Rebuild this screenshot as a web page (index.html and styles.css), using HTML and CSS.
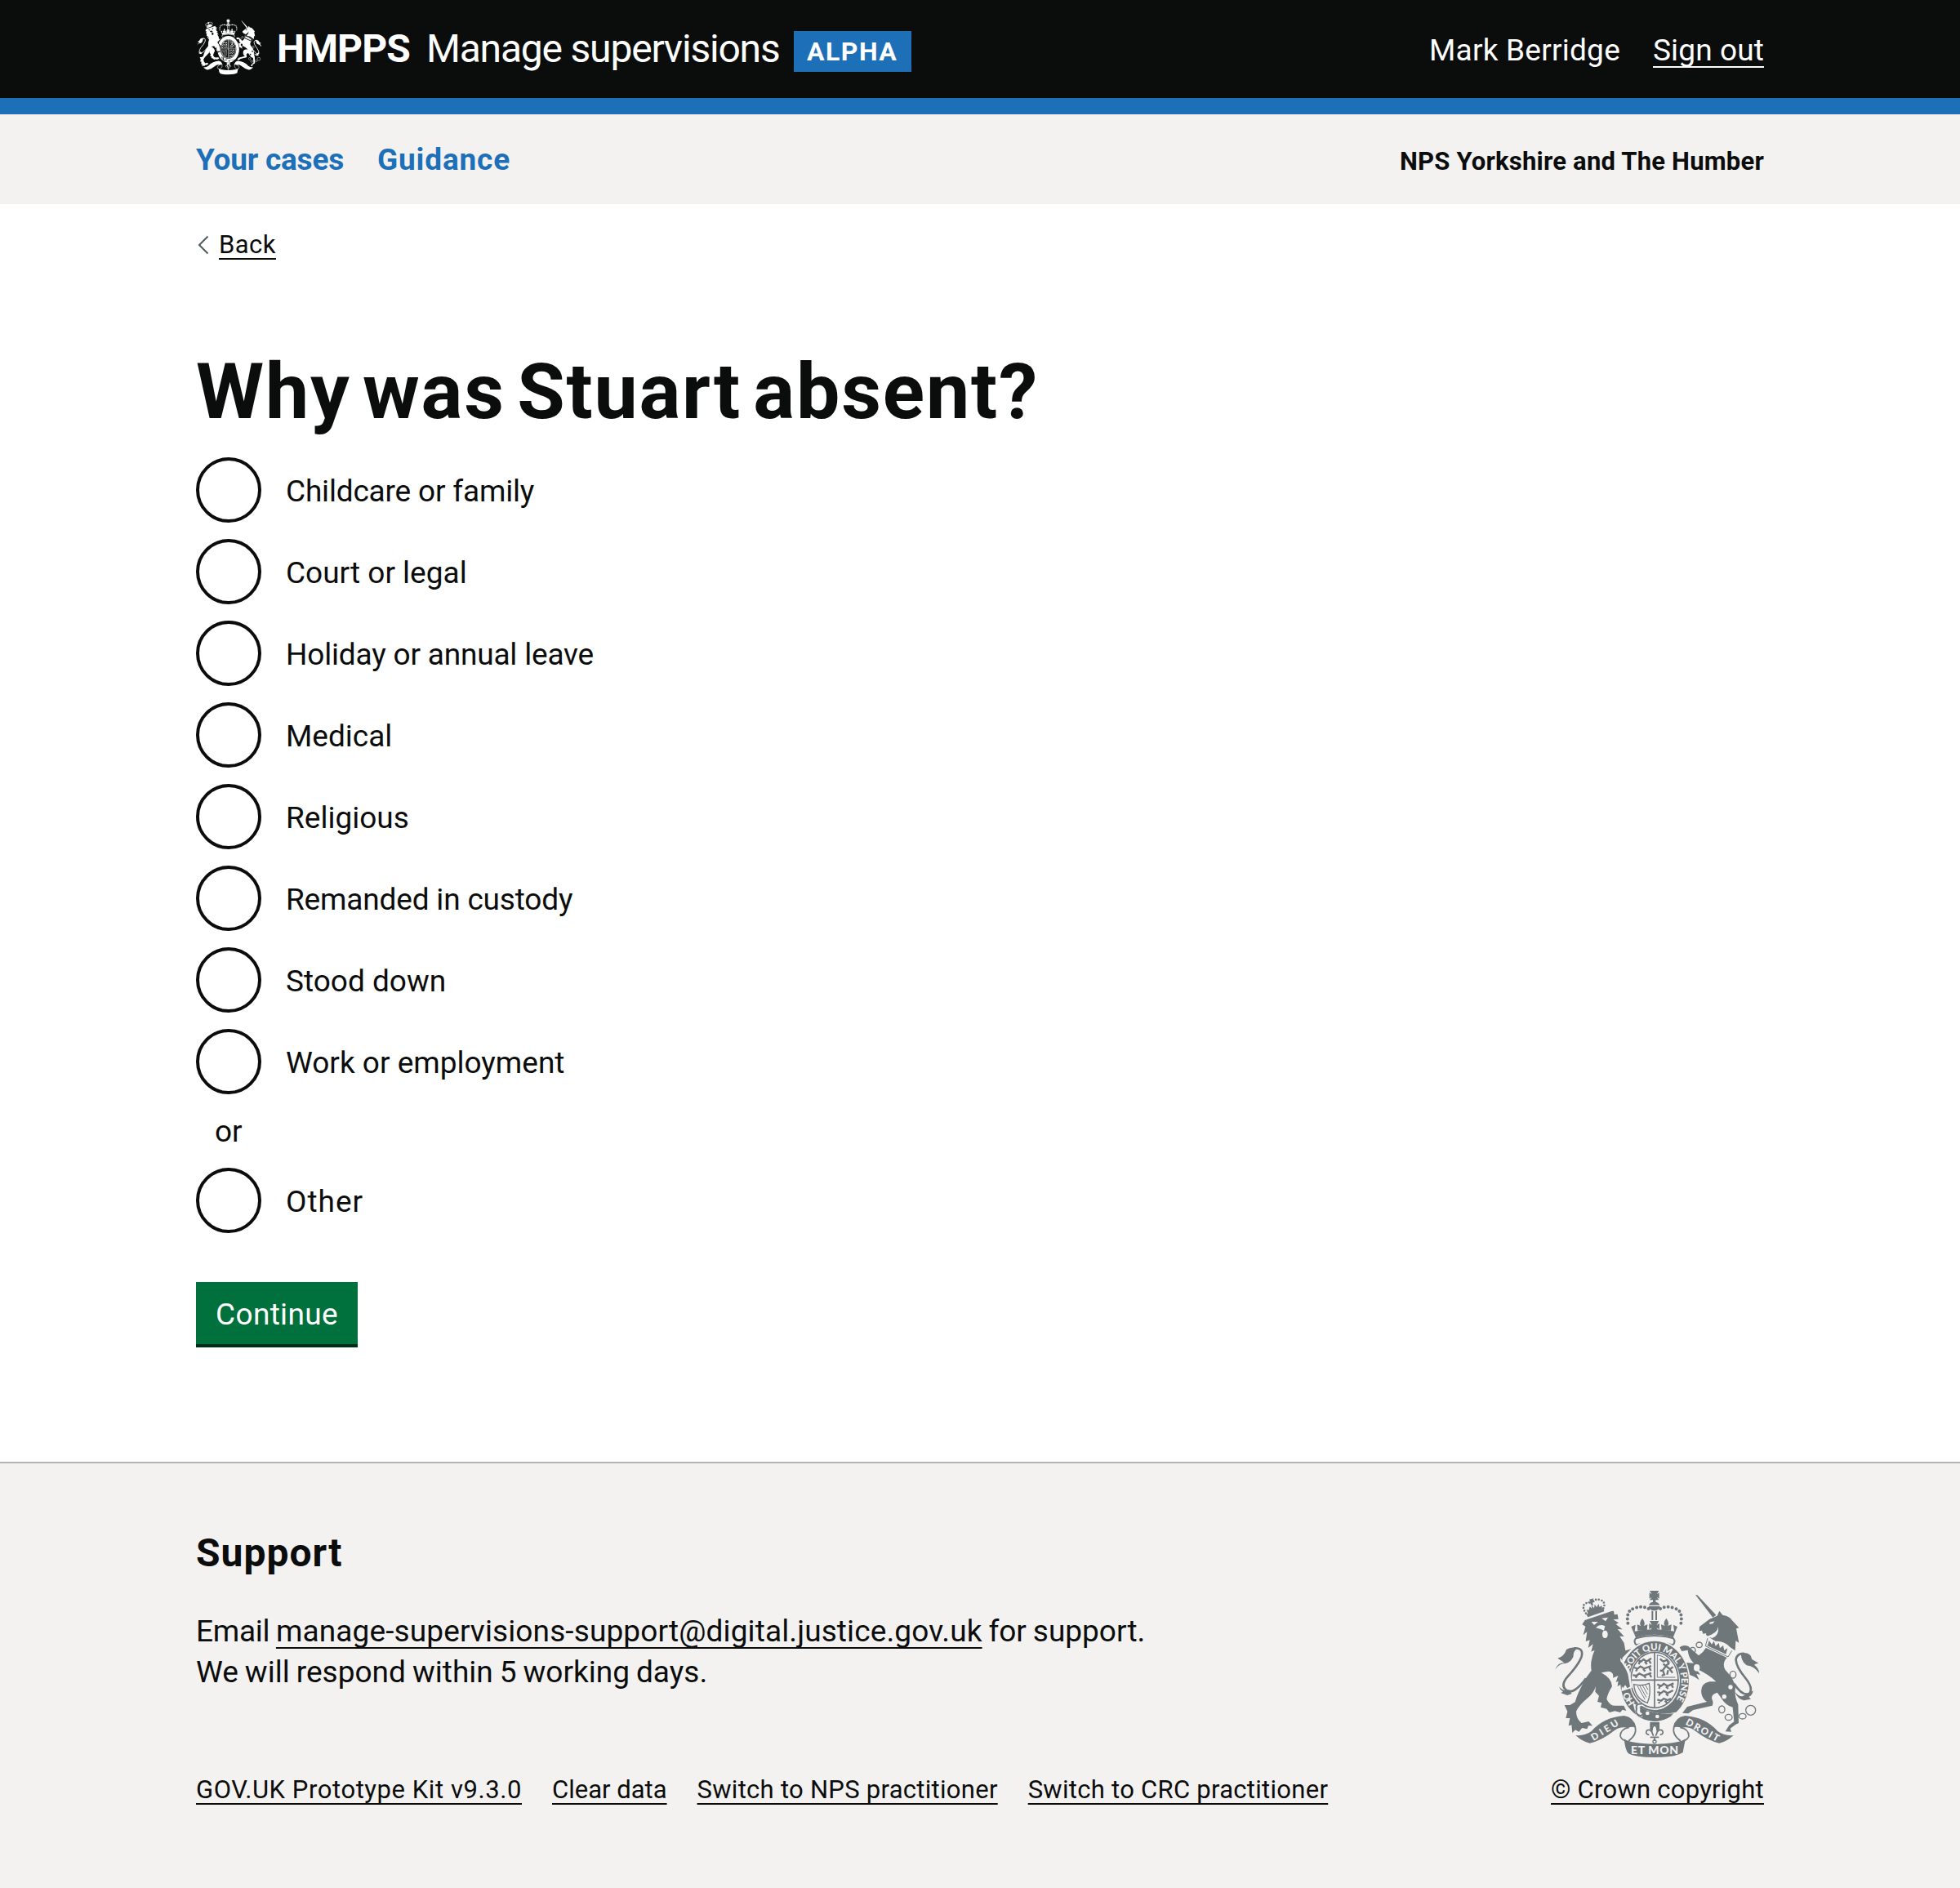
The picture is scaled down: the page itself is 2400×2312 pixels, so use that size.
FILE: index.html
```html
<!DOCTYPE html>
<html lang="en">
<head>
<meta charset="utf-8">
<title>Why was Stuart absent? – Manage supervisions</title>
<link rel="stylesheet" href="styles.css">
</head>
<body>
<svg class="defs" aria-hidden="true">
  <symbol id="arms" viewBox="54 48 786 624" preserveAspectRatio="none">
    <!-- Royal crown -->
    <g fill="currentColor">
      <path d="M420 54h34l-8 13 9-6v22l-9-6 8 11h-34l8-11-9 6V61l9 6Z"/>
      <path d="M432 87h10v8a20 18 0 0 1 15 12h-40a20 18 0 0 1 15-12Z"/>
      <path d="M416 111h42a21 16 0 0 1-42 0Z"/>
      <path d="M427 128h6v34h-6ZM441 128h6v34h-6Z"/>
      <path d="M420 165h34l-8 15 10-6v22l-10-6 6 12h-30l6-12-10 6v-22l10 6Z"/>
      <path d="M393 155q14 18 5 28l14-5-2 22h-34l-2-22 14 5q-9-10 5-28ZM481 155q14 18 5 28l14-5-2 22h-34l-2-22 14 5q-9-10 5-28Z"/>
      <path d="M352 186l16-7-3 24q72-14 145 0l-3-24 15 7-16 40q-69-22-137 0Z"/>
    </g>
    <path class="dots" d="M340 173Q332 125 365 118Q400 106 424 126M535 173Q543 125 510 118Q475 106 451 126"/>
    <path class="line" d="M369 229q68-20 138 0q10 12-2 24q-67-22-134 0q-12-12-2-24Z" stroke-width="6"/>
    <!-- Lion -->
    <g fill="currentColor">
      <path d="M172 178L182 162L280 129L288 128L290 142L302 140L305 158L286 160L306 172L296 177L320 196L302 195L326 222L310 221L326 246L331 274L352 268L320 300Q316 330 332 350Q346 368 348 408L338 412L330 400L322 412L314 398L302 404L309 385L296 390L304 366L285 374Q290 352 268 350L242 355Q280 375 282 405Q266 430 262 452Q275 480 300 476L325 476L334 495L320 491L312 501L292 496L272 501L262 488L240 482L244 466L228 462L234 440L220 425L222 405Q215 430 190 450Q160 475 150 497Q150 525 170 540L196 534L210 550L195 550L190 562L172 558L160 572L147 565L136 576L133 547L122 550L127 522L112 522L118 497L107 474L127 474L146 463Q155 430 175 395Q187 370 206 347Q200 310 218 272L205 278L212 250L194 264L200 235L185 240L190 205L176 217L184 185Z"/>
      <path d="M187 140L251 119L253 130L193 151Z"/>
      <path d="M200 112l8 8-2-12 10 10 2-14 8 10 6-12 4 12 8-6 2 14-52 18-6-18 8 4Z"/>
      <path d="M198 86l16-4-3 9 8 3-9 4 3 10-7 1-1-9-8 3 5-8Z"/>
      <path d="M72 345Q82 318 106 318L82 302Q106 296 114 270Q130 258 156 265Q138 276 140 295Q130 322 100 322Q82 328 72 345Z"/>
      <path d="M88 407Q105 425 124 418L134 432L118 438L94 430L102 424Q90 418 88 407Z"/>
    </g>
    <path class="dots dots-small" d="M186 137Q168 110 184 101Q200 92 206 102Q215 82 238 87Q262 96 249 120"/>
    <path class="line" d="M142 265Q178 262 170 295Q160 325 118 370Q92 400 112 418Q140 440 186 376" stroke-width="8"/>
    <g class="paper">
      <path d="M206 168l24 0-14 12ZM244 155l23-3-9 14ZM222 190q15-16 34-6l-4 16-14-6Z"/>
      <ellipse cx="256" cy="214" rx="10" ry="14"/>
    </g>
    <!-- Unicorn -->
    <g fill="currentColor">
      <path d="M588 69L595 70L664 143L652 152Z"/>
      <path d="M603 186L640 158L668 146L676 128L688 143Q716 148 722 162L748 190L738 193L748 245L736 238L734 274L714 260Q690 236 660 240L640 226Q622 216 628 210L616 212L612 200L602 202Z"/>
      <path d="M628 262L704 300Q684 320 698 345Q732 380 735 410Q730 440 745 472L747 540L736 545L716 560L720 572L698 571L712 548L730 535L725 482Q700 476 684 450Q672 432 668 428Q642 436 650 455Q655 465 650 476L580 492L562 505L540 503L558 480L630 462Q612 450 610 430Q605 395 640 388L664 388Q635 360 590 340L606 362L592 360L602 382L584 370L560 360L550 330L554 318L582 320Q562 300 560 272L538 276L530 262Q545 250 562 258L582 276L600 292Q618 280 628 262Z"/>
      <path d="M755 283Q792 278 796 306L820 320Q808 322 804 326Q823 340 822 357Q805 332 776 328Q756 315 755 283Z"/>
      <path d="M733 425Q750 445 762 441L800 421Q798 438 784 444L792 452L766 457Q742 450 733 425Z"/>
    </g>
    <path class="line" d="M730 395Q760 442 786 432Q802 412 772 375Q735 330 737 305Q742 283 768 285" stroke-width="8"/>
    <!-- Crown collar -->
    <path class="paper" d="M630 222L724 272L712 302L622 262Z"/>
    <path fill="currentColor" d="M634 252l4-16 10 15 8-12 6 18 12-11 4 19 12-10 4 18 12-8-6 22-70-32Z"/>
    <path class="line" d="M633 228L625 257L708 297L722 274" stroke-width="3"/>
    <g class="line" stroke-width="4">
      <ellipse cx="602" cy="253" rx="11" ry="10"/><ellipse cx="578" cy="273" rx="10" ry="11"/>
      <ellipse cx="726" cy="362" rx="11" ry="13"/><ellipse cx="685" cy="490" rx="11" ry="13"/>
      <ellipse cx="710" cy="519" rx="13" ry="11"/><ellipse cx="761" cy="515" rx="13" ry="10"/>
      <circle cx="791" cy="493" r="18"/>
    </g>
    <g class="paper">
      <ellipse cx="593" cy="337" rx="11" ry="13"/>
      <circle cx="717" cy="408" r="8"/><circle cx="694" cy="443" r="8"/>
      <path d="M640 170l18-4-6 9-12 1ZM628 222Q670 210 672 186Q676 218 650 228Z"/>
    </g>
    <!-- Garter -->
    <ellipse class="paper" cx="438" cy="386" rx="131" ry="152"/>
    <ellipse cx="438" cy="386" rx="126" ry="147" fill="currentColor"/>
    <ellipse class="paper" cx="438" cy="384" rx="93" ry="108"/>
    <g class="line" stroke-width="5">
      <path d="M438 278V482M350 382H526"/>
      <ellipse cx="438" cy="382" rx="87" ry="102"/>
      <path d="M448 290V372H514M448 290Q480 296 496 318" stroke-width="3"/>
      <path d="M362 398q30 8 56-4q8 36-6 72q-46-14-50-68Z" stroke-width="4"/>
      <path d="M375 404l28 50M384 404l24 42M394 402l18 32M404 400l10 18" stroke-width="3"/>
    </g>
    <!-- Lions passant and rampant in the quarters -->
    <g class="line" stroke-width="7">
      <path d="M376 308l12 6 10-8 10 8 18-12M384 314l-4 10M402 314l8 10M418 310l6 12M362 336l14 4 10-8 14 8 26-10M374 340l-4 10M396 342l8 8M418 334l6 14M358 364l14 2 10-8 16 8 28-10M374 366l-6 8M400 368l6 6M420 360l6 12"/>
      <path d="M448 398l14 6 10-8 14 8 22-10M458 404l-4 10M480 406l8 8M500 398l6 12M448 426l14 4 10-8 14 8 20-10M458 430l-4 10M480 432l8 8M448 454l14 4 10-8 14 6 12-6M456 458l-2 10M476 458l8 8"/>
      <path d="M458 304l12 10 14-6 6 14-12 8-8-8M480 330l14 12 12-8M480 330l-12 16-10 2M488 346l-4 16M468 346l6 16-10 4M494 342l10 14"/>
    </g>
    <!-- Buckle and strap -->
    <path class="paper" d="M358 466Q440 520 516 500L524 508Q440 526 370 512Z"/>
    <path fill="currentColor" d="M372 476Q438 512 508 505Q480 532 438 533Q400 530 372 510Z"/>
    <path class="paper-line" d="M388 470q-18 4-10 20q-4 18 16 22" stroke-width="14"/>
    <path class="line" d="M390 470q-24-2-18 18q-8 20 16 26l10-10M388 486q14-4 18 4" stroke-width="6"/>
    <circle class="paper" cx="412" cy="504" r="7"/><circle class="paper" cx="448" cy="516" r="7"/>
    <!-- Lion's paw over the garter -->
    <path class="paper" d="M312 300L346 345L356 410L316 424L318 402Z"/>
    <path fill="currentColor" d="M300 300Q326 322 340 360L348 406L338 412L330 400L322 412L314 398L302 404L308 366Z"/>
    <!-- Ribbons -->
    <path class="paper" d="M322 598L360 545L430 560H450L520 545L556 596L438 622Z"/>
    <g id="ribbon-half">
      <path fill="currentColor" d="M148 585Q182 588 206 570Q250 519 326 513Q362 518 370 556Q352 552 340 558Q312 551 290 568Q242 606 200 614Q174 609 148 585Z"/>
      <path class="line" d="M344 556Q312 562 312 588Q318 602 332 606M366 552Q376 582 342 606" stroke-width="5"/>
    </g>
    <use href="#ribbon-half" transform="matrix(-1 0 0 1 876 0)"/>
    <path fill="currentColor" d="M326 598Q350 616 438 617Q526 616 552 598Q545 630 542 648Q515 666 440 666Q365 666 342 652Q330 640 326 598Z"/>
    <!-- Fleur-de-lis -->
    <path fill="currentColor" d="M421 537h35v30h-35Z"/>
    <g class="paper-line" stroke-width="14"><path d="M438 548v58M412 576q12-14 20 12M464 576q-12-14-20 12"/></g>
    <path class="line" d="M438 545q18 20 4 42q8-28 24-20q8 14-8 16M438 545q-18 20-4 42q-8-28-24-20q-8 14 8 16M422 592h32M438 592v14" stroke-width="5"/>
    <circle class="line" cx="438" cy="608" r="6" stroke-width="4"/>
  </symbol>
</svg>

<header class="header">
  <div class="container header-row">
    <a class="brand" href="#">
      <svg class="brand-arms"><use href="#arms"/></svg>
      <span class="org">HMPPS</span>
      <span class="service">Manage supervisions</span>
    </a>
    <span class="tag">ALPHA</span>
    <div class="account">
      <span class="user">Mark Berridge</span>
      <a class="sign-out" href="#">Sign out</a>
    </div>
  </div>
</header>

<nav class="primary-nav">
  <div class="container nav-row">
    <a class="nav-cases" href="#">Your cases</a>
    <a class="nav-guidance" href="#">Guidance</a>
    <span class="region">NPS Yorkshire and The Humber</span>
  </div>
</nav>

<main class="container main">
  <a class="back" href="#">
    <svg class="chevron" viewBox="0 0 14 24"><path d="M12.5 1.5L2 12L12.5 22.5"/></svg>
    <span>Back</span>
  </a>
  <form>
    <h1>Why was Stuart absent?</h1>
    <div class="radios">
      <label><input type="radio" name="reason"><span class="tight">Childcare or family</span></label>
      <label><input type="radio" name="reason"><span>Court or legal</span></label>
      <label><input type="radio" name="reason"><span class="tight">Holiday or annual leave</span></label>
      <label><input type="radio" name="reason"><span>Medical</span></label>
      <label><input type="radio" name="reason"><span>Religious</span></label>
      <label><input type="radio" name="reason"><span class="tight">Remanded in custody</span></label>
      <label><input type="radio" name="reason"><span>Stood down</span></label>
      <label><input type="radio" name="reason"><span>Work or employment</span></label>
    </div>
    <div class="divider">or</div>
    <div class="radios">
      <label><input type="radio" name="reason"><span class="loose">Other</span></label>
    </div>
    <button type="button">Continue</button>
  </form>
</main>

<footer class="footer">
  <div class="container footer-row">
    <div class="footer-main">
      <h2>Support</h2>
      <p><span class="email-word">Email </span><a href="#">manage-supervisions-support@digital.justice.gov.uk</a> for support.<br><span class="response">We will respond within 5 working days.</span></p>
      <div class="footer-links">
        <a class="kit" href="#">GOV.UK Prototype Kit v9.3.0</a>
        <a class="clear" href="#">Clear data</a>
        <a href="#">Switch to NPS practitioner</a>
        <a href="#">Switch to CRC practitioner</a>
      </div>
    </div>
    <div class="copyright">
      <svg class="footer-arms" viewBox="54 48 786 624" preserveAspectRatio="none">
        <use href="#arms" x="54" y="48" width="786" height="624"/>
        <g class="motto">
          <path id="garter-path" fill="none" d="M349 438A100 116 0 0 1 438 272A100 116 0 0 1 495 482"/>
          <text font-size="34"><textPath href="#garter-path" startOffset="96" textLength="362">SOIT QUI MAL Y PENSE</textPath></text>
          <text font-size="34" transform="translate(366 466) rotate(-122)" textLength="50">HO</text>
          <text font-size="35" transform="translate(214 606) rotate(-32)" textLength="112">DIEU</text>
          <text font-size="42" x="351" y="655" textLength="174">ET MON</text>
          <text font-size="35" transform="translate(550 544) rotate(29)" textLength="134">DROIT</text>
        </g>
      </svg>
      <a href="#">© Crown copyright</a>
    </div>
  </div>
</footer>
</body>
</html>
```
FILE: styles.css
```css
* {
  box-sizing: border-box;
}

body {
  margin: 0;
  background: #fff;
  color: #0b0c0c;
  font: 400 37px/50px Roboto, "Liberation Sans", sans-serif;
}

a {
  color: inherit;
  text-decoration: underline;
  text-decoration-thickness: 2px;
  text-decoration-skip-ink: none;
  text-underline-offset: 7px;
}

.container {
  width: 1920px;
  margin: 0 auto;
}

.defs {
  position: absolute;
  width: 0;
  height: 0;
}

/* Coat of arms */
.paper {
  fill: var(--paper);
}

.paper-line {
  fill: none;
  stroke: var(--paper);
}

.line {
  fill: none;
  stroke: currentColor;
}

.dots {
  fill: none;
  stroke: currentColor;
  stroke-width: 12;
  stroke-linecap: round;
  stroke-dasharray: 0 15;
}

.dots-small {
  stroke-width: 8;
  stroke-dasharray: 0 11;
}

.motto {
  fill: var(--paper);
  font-family: Lato, "Liberation Sans", sans-serif;
  font-weight: 900;
  letter-spacing: 0;
}

/* Header */
.header {
  height: 140px;
  background: #0b0c0c;
  border-bottom: 20px solid #1d70b8;
  color: #fff;
}

.header-row {
  display: flex;
  height: 120px;
}

.brand {
  display: flex;
  font-size: 48px;
  line-height: 120px;
  text-decoration: none;
}

.brand-arms {
  --paper: #0b0c0c;
  width: 83px;
  height: 69px;
  margin: 23px 17px 0 -1px;
}

.org {
  width: 183px;
  font-weight: 700;
  letter-spacing: -0.9px;
}

.service {
  width: 450px;
  letter-spacing: -1.2px;
  white-space: nowrap;
}

.tag {
  width: 144px;
  height: 50px;
  margin-top: 38px;
  padding-left: 16px;
  background: #1d70b8;
  font-size: 32px;
  font-weight: 700;
  line-height: 51px;
  letter-spacing: 1.5px;
}

.account {
  display: flex;
  gap: 40px;
  margin-left: auto;
  padding-top: 3px;
  line-height: 117px;
}

.user {
  letter-spacing: 0.24px;
}

.sign-out {
  letter-spacing: 0.13px;
}

/* Navigation */
.primary-nav {
  height: 110px;
  background: #f3f2f1;
}

.nav-row {
  display: flex;
  font-weight: 700;
  line-height: 112px;
}

.primary-nav a {
  color: #1d70b8;
  text-decoration: none;
}

.nav-cases {
  width: 222px;
  letter-spacing: -0.22px;
}

.nav-guidance {
  letter-spacing: 0.83px;
}

.region {
  margin-left: auto;
  padding-top: 4px;
  font-size: 31px;
  line-height: 107px;
  letter-spacing: 0.21px;
}

/* Main content */
.main {
  height: 1540px;
  padding-top: 25px;
}

.back {
  display: flex;
  width: 100px;
  font-size: 31px;
  letter-spacing: 0.47px;
  text-decoration: none;
}

.back span {
  text-decoration: underline 2px;
  text-underline-offset: 6px;
}

.chevron {
  width: 14px;
  height: 24px;
  margin: 13px 12px 0 2px;
  fill: none;
  stroke: #505a5f;
  stroke-width: 2;
}

h1 {
  margin: 105px 0 30px;
  font-size: 95px;
  line-height: 100px;
  letter-spacing: 1.8px;
  word-spacing: -11px;
}

.radios {
  display: grid;
  gap: 20px;
}

.radios label {
  display: flex;
  gap: 30px;
  height: 80px;
  line-height: 83px;
}

.radios input {
  appearance: none;
  width: 80px;
  height: 80px;
  margin: 0;
  border: 4px solid #0b0c0c;
  border-radius: 50%;
}

.tight {
  letter-spacing: -0.18px;
}

.loose {
  letter-spacing: 1px;
}

.divider {
  height: 90px;
  padding-left: 23px;
  line-height: 91px;
}

button {
  display: block;
  width: 198px;
  height: 76px;
  margin-top: 60px;
  padding: 0;
  border: 0;
  background: #00703c;
  box-shadow: 0 4px 0 #002d18;
  color: #fff;
  font: inherit;
  line-height: 79px;
  letter-spacing: 0.35px;
}

/* Footer */
.footer {
  height: 522px;
  background: #f3f2f1;
  border-top: 2px solid #b1b4b6;
}

.footer-row {
  display: flex;
  justify-content: space-between;
}

.footer-main {
  padding-top: 80px;
}

h2 {
  margin: 0;
  font-size: 48px;
  line-height: 60px;
  letter-spacing: 1px;
}

p {
  margin: 41px 0 0;
  word-spacing: -1.3px;
}

p a {
  letter-spacing: 0.12px;
}

.email-word {
  letter-spacing: -0.26px;
}

.response {
  letter-spacing: 0.03px;
}

.footer-links {
  display: flex;
  gap: 37px;
  margin-top: 99px;
  font-size: 31px;
  line-height: 40px;
  letter-spacing: 0.28px;
}

.footer-links a,
.copyright a {
  text-underline-offset: 6px;
}

.kit {
  letter-spacing: 0.57px;
}

.clear {
  letter-spacing: 0;
}

.copyright {
  display: flex;
  flex-direction: column;
  align-items: flex-end;
  padding-top: 154px;
  font-size: 31px;
  line-height: 40px;
  letter-spacing: 0.25px;
}

.footer-arms {
  --paper: #f3f2f1;
  width: 262px;
  height: 208px;
  margin-bottom: 18px;
  color: #6f777b;
}
```
